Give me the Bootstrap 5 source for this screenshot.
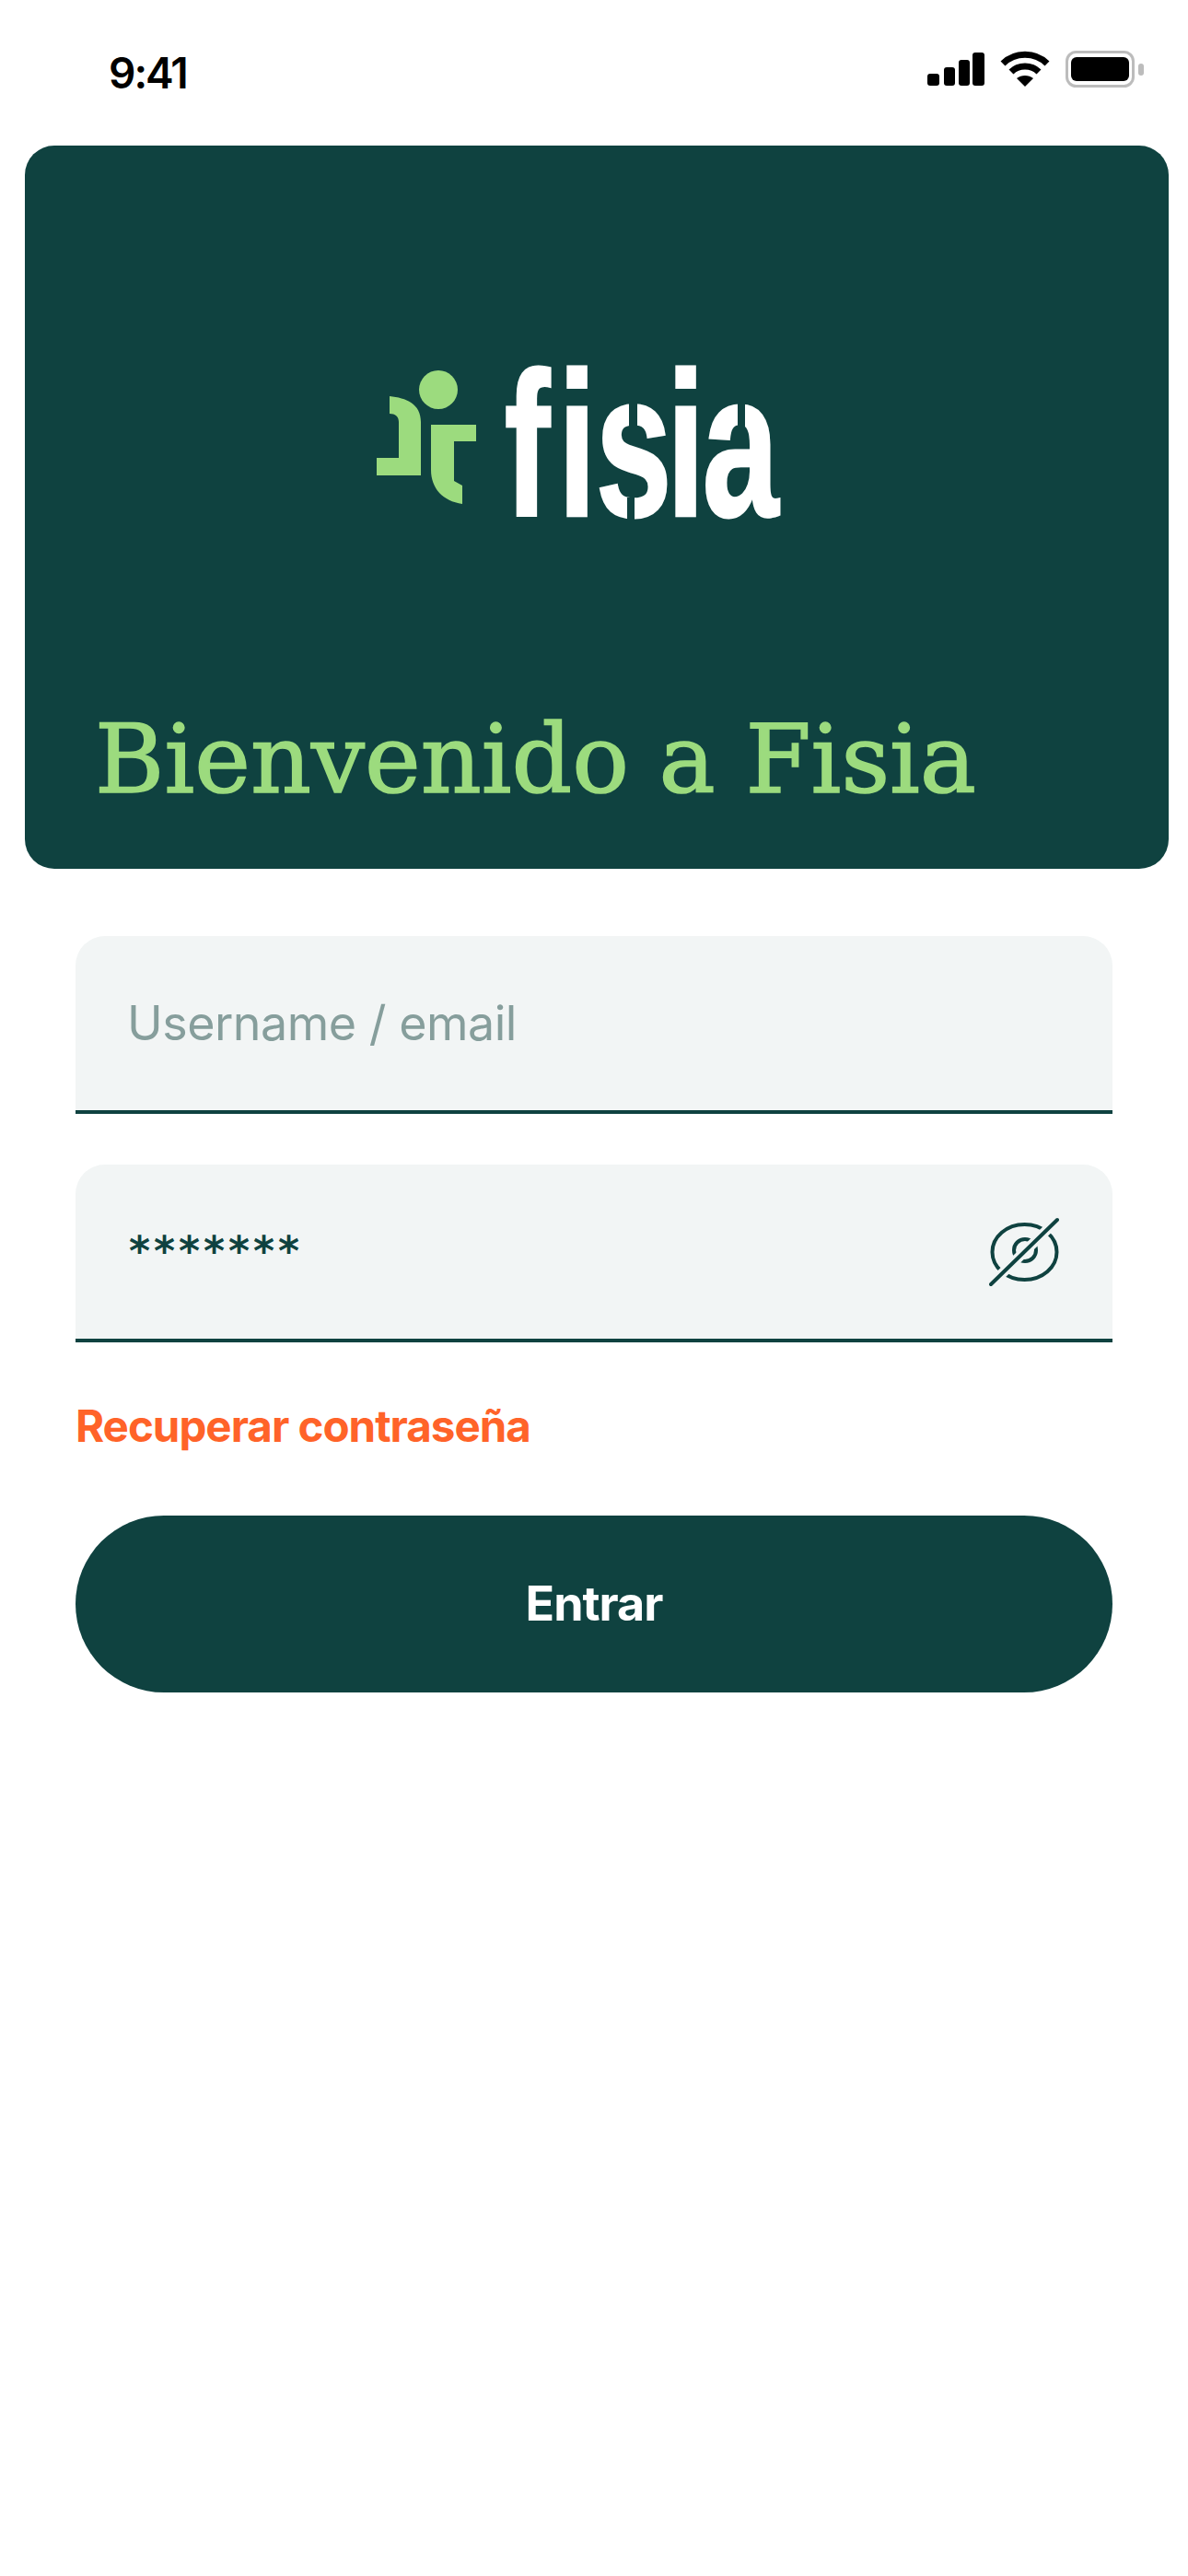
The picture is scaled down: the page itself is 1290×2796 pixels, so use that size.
<!DOCTYPE html>
<html lang="es">
<head>
<meta charset="utf-8">
<title>Fisia</title>
<link href="https://cdn.jsdelivr.net/npm/bootstrap@5.3.0/dist/css/bootstrap.min.css" rel="stylesheet">
<style>
html,body{height:100%;background:#fff;}
body{font-family:Inter,"Liberation Sans",sans-serif;color:#0f4240;}
.phone{width:1290px;min-height:2796px;}
.statusbar{height:158px;padding:0 47px 0 118px;}
.clock{font-size:46px;font-weight:600;color:#000;letter-spacing:-2px;line-height:1;}
.status-icons{margin-top:-8px;gap:17px;}
.hero{margin:0 21px 0 27px;height:785px;background:#0f4240;border-radius:32px;}
.logo-box{padding-top:232px;padding-left:382px;}
.logo-box svg{display:block;overflow:visible;}
.hero-title{font-family:"DejaVu Serif",serif;font-weight:400;font-size:102.6px;line-height:1;color:#9cdb7e;-webkit-text-stroke:1.6px #9cdb7e;margin:0;padding:0 0 66px 76px;white-space:nowrap;}
.login-form{padding:73px 82px 0 82px;}
.field{height:193px;background:#f2f5f5;border:0;border-bottom:4px solid #0f4240;border-radius:32px 32px 0 0;padding:0 58px;font-size:52px;margin-bottom:55px;}
.field-ph{color:#869e9c;letter-spacing:-.5px;margin-left:-2px;}
.field-stars{font-family:"DejaVu Sans",sans-serif;font-weight:700;font-size:44px;letter-spacing:4px;color:#0f4240;margin-top:-2px;}
.forgot{color:#ff6329;font-size:47.5px;font-weight:700;letter-spacing:-1px;line-height:1;text-decoration:none;margin-top:67px;margin-bottom:73px;display:block;}
.enter-btn{width:100%;height:192px;border-radius:96px;background:#0f4240;border:0;color:#fff;font-size:52px;font-weight:700;letter-spacing:-1px;}
.enter-btn:hover{background:#0f4240;color:#fff;}
</style>
</head>
<body>
<div class="phone d-flex flex-column">
  <div class="statusbar d-flex justify-content-between align-items-center">
    <span class="clock">9:41</span>
    <div class="status-icons d-flex align-items-center">
      <svg width="62" height="36" viewBox="0 0 62 36" aria-hidden="true"><rect x="0" y="23" width="13" height="13" rx="3"/><rect x="18" y="16" width="12" height="20" rx="3"/><rect x="34" y="8" width="12" height="28" rx="3"/><rect x="49" y="0" width="13" height="36" rx="3"/></svg>
      <svg width="54" height="40" viewBox="0 0 54 40" fill="none" stroke="#000" stroke-width="7" aria-hidden="true"><path d="M3 14C16 1 38 1 51 14"/><path d="M12 23C20 15 34 15 42 23"/><path d="M27 39L18 30C23 26 31 26 36 30Z" fill="#000" stroke="none"/></svg>
      <svg width="86" height="40" viewBox="0 0 86 40" aria-hidden="true"><rect x="1.5" y="1.5" width="72" height="37" rx="10" fill="none" stroke="#bcbcbc" stroke-width="3"/><rect x="6" y="7" width="63" height="26" rx="6"/><rect x="79" y="14" width="6" height="13" rx="3" fill="#bcbcbc"/></svg>
    </div>
  </div>
  <section class="hero d-flex flex-column justify-content-between">
    <div class="logo-box">
      <svg width="450" height="190" viewBox="0 0 450 190" aria-label="fisia logo">
        <g fill="#9cdb7e">
          <circle cx="67" cy="33" r="21"/>
          <path d="M14 40C32 42 48 48 48 68V126H0V107H24V68C24 62 20 59 14 59Z"/>
          <path d="M59 71H108V89H84V132L93 137V157C72 154 59 140 59 120Z"/>
        </g>
        <g transform="scale(.67 1)">
          <text x="207 294 355 470 528" y="170" fill="#fff" stroke="#fff" stroke-width="3" font-family="Liberation Sans,sans-serif" font-weight="700" font-size="222">fisia</text>
        </g>
        <g fill="#0f4240">
          <rect x="274" y="44" width="9" height="28"/>
          <rect x="272" y="150" width="8" height="24"/>
          <rect x="392" y="44" width="8" height="40"/>
        </g>
      </svg>
    </div>
    <h1 class="hero-title">Bienvenido a Fisia</h1>
  </section>
  <form class="login-form" onsubmit="return false">
    <div class="field d-flex align-items-center"><span class="field-ph">Username / email</span></div>
    <div class="field d-flex align-items-center justify-content-between">
      <span class="field-stars">*******</span>
      <svg width="76" height="76" viewBox="0 0 76 76" fill="none" stroke="#0f4240" stroke-width="4" stroke-linecap="round" aria-hidden="true" class="flex-shrink-0"><ellipse cx="38.5" cy="38" rx="35" ry="30"/><circle cx="39" cy="36" r="12"/><path d="M2 73L74 3" stroke="#f2f5f5" stroke-width="11" stroke-linecap="butt"/><path d="M2 73L74 3"/></svg>
    </div>
    <a href="#" class="forgot">Recuperar contraseña</a>
    <button type="button" class="btn enter-btn">Entrar</button>
  </form>
</div>
<script src="https://cdn.jsdelivr.net/npm/bootstrap@5.3.0/dist/js/bootstrap.bundle.min.js"></script>
</body>
</html>
